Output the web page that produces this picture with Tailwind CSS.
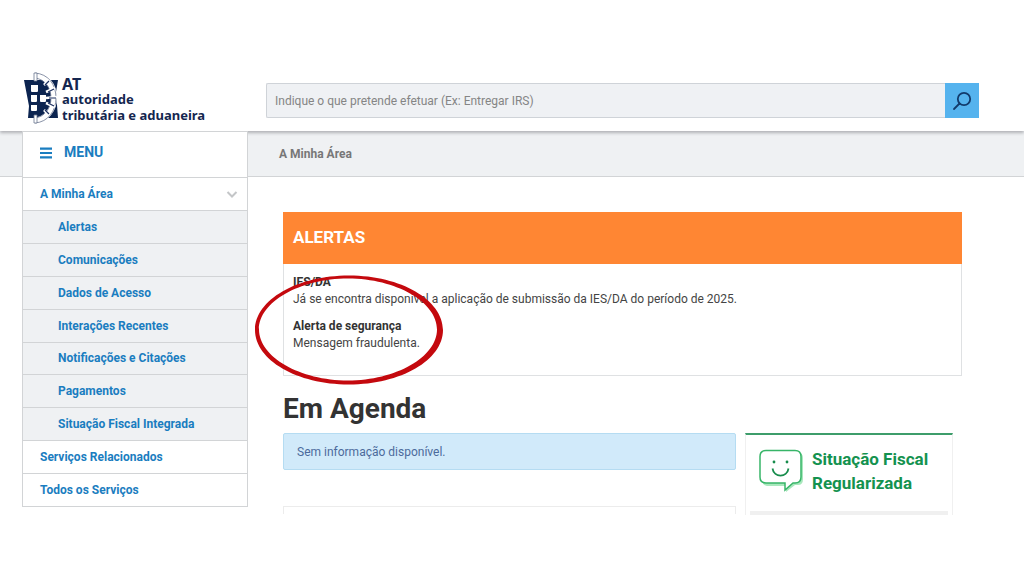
<!DOCTYPE html>
<html lang="pt">
  <head>
    <meta charset="UTF-8">
    <meta name="viewport" content="width=device-width, initial-scale=1.0">
    <title>Autoridade Tributária e Aduaneira - A Minha Área</title>
    <script src="https://cdn.jsdelivr.net/npm/@tailwindcss/browser@4"></script>
  </head>
  <body class="bg-white font-['Roboto',sans-serif] text-[12px] text-[#444]">
    <!-- Header: logo and search -->
    <header class="relative z-10 flex items-start bg-white pt-[72px] pb-[7px] pl-6 pr-[45px] shadow-[0_2px_3px_#b0b2b6]">
      <a href="#" class="flex w-[242px] shrink-0 items-start gap-[3px] text-[#14264f]">
        <svg class="h-[52px] w-[35px]" viewBox="0 0 35 52" fill="none">
          <path d="M0 8H34L32 20L34 46H4L5 34Z" fill="#0c2450"/>
          <path d="M11 3C22 4 30 13 30 26C30 38 22 47 11 49" stroke="#fff" stroke-width="6"/>
          <path d="M11 1C24 2 32 12 32 26C32 39 24 50 11 51M11 6C20 7 27 15 27 26C27 37 20 45 11 46" stroke="#6b7690" stroke-width="0.800"/>
          <path d="M25 8L20 13M31 16L22 20M33 25L22 26M31 35L22 31M25 43L20 38" stroke="#fff" stroke-width="2.600"/>
          <path d="M25 9L21 13M30 17L24 20M32 26H25M30 34L24 31M25 42L21 38" stroke="#1d3160" stroke-width="1.200"/>
          <path d="M10 1h3v8h-3zM10 43h3v8h-3z" fill="#fff" stroke="#6b7690" stroke-width="0.800"/>
          <g fill="#fff">
            <path d="M7 13h7v6q0 1-1 1H8q-1 0-1-1zM7 23h6v6q0 1-1 1H8q-1 0-1-1zM16 23h6v6q0 1-1 1h-4q-1 0-1-1zM7 33h6v5q0 1-1 1H8q-1 0-1-1z"/>
          </g>
        </svg>
        <span class="pt-1 font-['Noto_Sans',sans-serif] text-[13px] leading-[13px] font-bold">
          <span class="block text-[16px] leading-[17px]">AT</span>
          <span class="block pb-[3px]">autoridade</span>
          <span class="block">tributária e aduaneira</span>
        </span>
      </a>
      <form class="mt-[11px] flex h-[35px] flex-1">
        <input type="text" id="search" aria-label="Pesquisar" placeholder="Indique o que pretende efetuar (Ex: Entregar IRS)" class="min-w-0 flex-1 rounded-l-xs border border-r-0 border-[#cfd3d8] bg-[#eff1f4] px-2 placeholder:text-[#858585]">
        <button type="submit" aria-label="Pesquisar" class="flex w-[34px] items-center justify-center bg-[#55b3ee] text-[#123a6b]">
          <svg class="size-5" viewBox="0 0 20 20" fill="none" stroke="currentColor" stroke-width="1.8" stroke-linecap="round">
            <circle cx="12" cy="8" r="6.2"/>
            <path d="M7.500 12.500L2 18"/>
          </svg>
        </button>
      </form>
    </header>
    <div class="flex items-start">
      <div class="h-[46px] w-[22px] shrink-0 border-b border-[#d2d4d6] bg-[#eff1f3]"></div>
      <!-- Side menu -->
      <nav class="relative z-20 w-[226px] shrink-0 border border-[#d2d4d6] bg-white font-bold text-[#1a7dc0]">
        <button type="button" class="flex h-[45px] w-full items-center gap-3 px-[17px] pb-1 text-[14px]">
          <svg class="h-3 w-3" viewBox="0 0 12 12" fill="currentColor"><path d="M0 0.500h12v2.200H0zM0 4.900h12v2.200H0zM0 9.300h12v2.200H0z"/></svg>
          <span>MENU</span>
        </button>
        <ul class="grid h-[329px] auto-rows-fr">
          <li class="flex items-center justify-between border-t border-[#d2d4d6] pr-[9px] pl-[17px]">
            <a href="#">A Minha Área</a>
            <svg class="h-3 w-3" viewBox="0 0 12 12" fill="none" stroke="#c4c6c8" stroke-width="2"><path d="M1.500 4L6 8.500L10.500 4"/></svg>
          </li>
          <li class="flex items-center border-t border-[#d2d4d6] bg-[#eff1f3] pl-[35px]"><a href="#">Alertas</a></li>
          <li class="flex items-center border-t border-[#d2d4d6] bg-[#eff1f3] pl-[35px]"><a href="#">Comunicações</a></li>
          <li class="flex items-center border-t border-[#d2d4d6] bg-[#eff1f3] pl-[35px]"><a href="#">Dados de Acesso</a></li>
          <li class="flex items-center border-t border-[#d2d4d6] bg-[#eff1f3] pl-[35px]"><a href="#">Interações Recentes</a></li>
          <li class="flex items-center border-t border-[#d2d4d6] bg-[#eff1f3] pl-[35px]"><a href="#">Notificações e Citações</a></li>
          <li class="flex items-center border-t border-[#d2d4d6] bg-[#eff1f3] pl-[35px]"><a href="#">Pagamentos</a></li>
          <li class="flex items-center border-t border-[#d2d4d6] bg-[#eff1f3] pl-[35px]"><a href="#">Situação Fiscal Integrada</a></li>
          <li class="flex items-center border-t border-[#d2d4d6] pl-[17px]"><a href="#">Serviços Relacionados</a></li>
          <li class="flex items-center border-t border-[#d2d4d6] pl-[17px]"><a href="#">Todos os Serviços</a></li>
        </ul>
      </nav>
      <div class="min-w-0 flex-1">
        <div class="flex h-[46px] items-center border-b border-[#d2d4d6] bg-[#eff1f3] pl-[31px] font-bold text-[#777]">A Minha Área</div>
        <main class="pt-[35px] pr-[62px] pl-[35px]">
          <section class="relative">
            <h2 class="flex h-[52px] items-center bg-[#ff8633] px-[10px] text-[17px] font-bold text-white">ALERTAS</h2>
            <div class="h-[112px] border border-t-0 border-[#dfe1e3] px-[9px] pt-[10px] leading-[17px]">
              <p class="font-bold text-[#333]">IES/DA</p>
              <p>Já se encontra disponível a aplicação de submissão da IES/DA do período de 2025.</p>
              <p class="mt-[10px] font-bold text-[#333]">Alerta de segurança</p>
              <p>Mensagem fraudulenta.</p>
            </div>
            <!-- Highlight around the security alert -->
            <svg class="absolute top-[63px] -left-[29px] h-[110px] w-[190px]" viewBox="0 0 190 110" fill="#c4090e" fill-rule="evenodd">
              <path d="M95 0.500C147 0.500 189 25 189 55S147 109.500 95 109.500S1 85 1 55S43 0.500 95 0.500ZM94 3.500C46 3.500 5 27 5 54.500S46 105.500 94 105.500S183 82 183 54.500S142 3.500 94 3.500Z"/>
            </svg>
          </section>
          <h1 class="mt-4 text-[28px] leading-[34px] font-bold text-[#333]">Em Agenda</h1>
          <div class="mt-[7px] mr-[9px] flex items-start gap-[9px]">
            <div class="flex-1">
              <p class="flex h-[37px] items-center rounded-xs border border-[#b5dcf2] bg-[#d1eafa] px-[13px] text-[#4c6a9c]">Sem informação disponível.</p>
              <div class="mt-9 h-2 border border-b-0 border-[#ececec]"></div>
            </div>
            <!-- Tax status card -->
            <section class="w-[208px] border-x border-t-2 border-x-[#f0f0f0] border-t-[#3d9d6b] px-1">
              <div class="flex h-[76px] items-start gap-2 pt-3 pl-[9px]">
                <svg class="mt-[2px] h-11 w-[45px] shrink-0" viewBox="0 0 45 44" fill="none">
                  <path d="M8 4H39Q44 4 44 9V30Q44 36 39 36H36L27 43V37H8Q3 36 3 31V9Q3 4 8 4Z" fill="#a9e8bd"/>
                  <path d="M7 1.500H36Q42 1.500 42 7.500V28Q42 34 36 34H34L26 41V34H7Q1 34 1 28V7.500Q1 1.500 7 1.500Z" fill="#fff" stroke="#37b568" stroke-width="1.500"/>
                  <path d="M13.500 19.500C15 29 28 29 29.500 19.500" stroke="#178c4c" stroke-width="1.800"/>
                  <circle cx="15" cy="13" r="1.400" fill="#178c4c"/>
                  <circle cx="28" cy="13" r="1.400" fill="#178c4c"/>
                </svg>
                <h3 class="text-[17px] leading-6 font-bold text-[#14924f]">Situação Fiscal<br>Regularizada</h3>
              </div>
              <div class="h-1 bg-[#f0f0f0]"></div>
            </section>
          </div>
        </main>
      </div>
    </div>
  </body>
</html>
